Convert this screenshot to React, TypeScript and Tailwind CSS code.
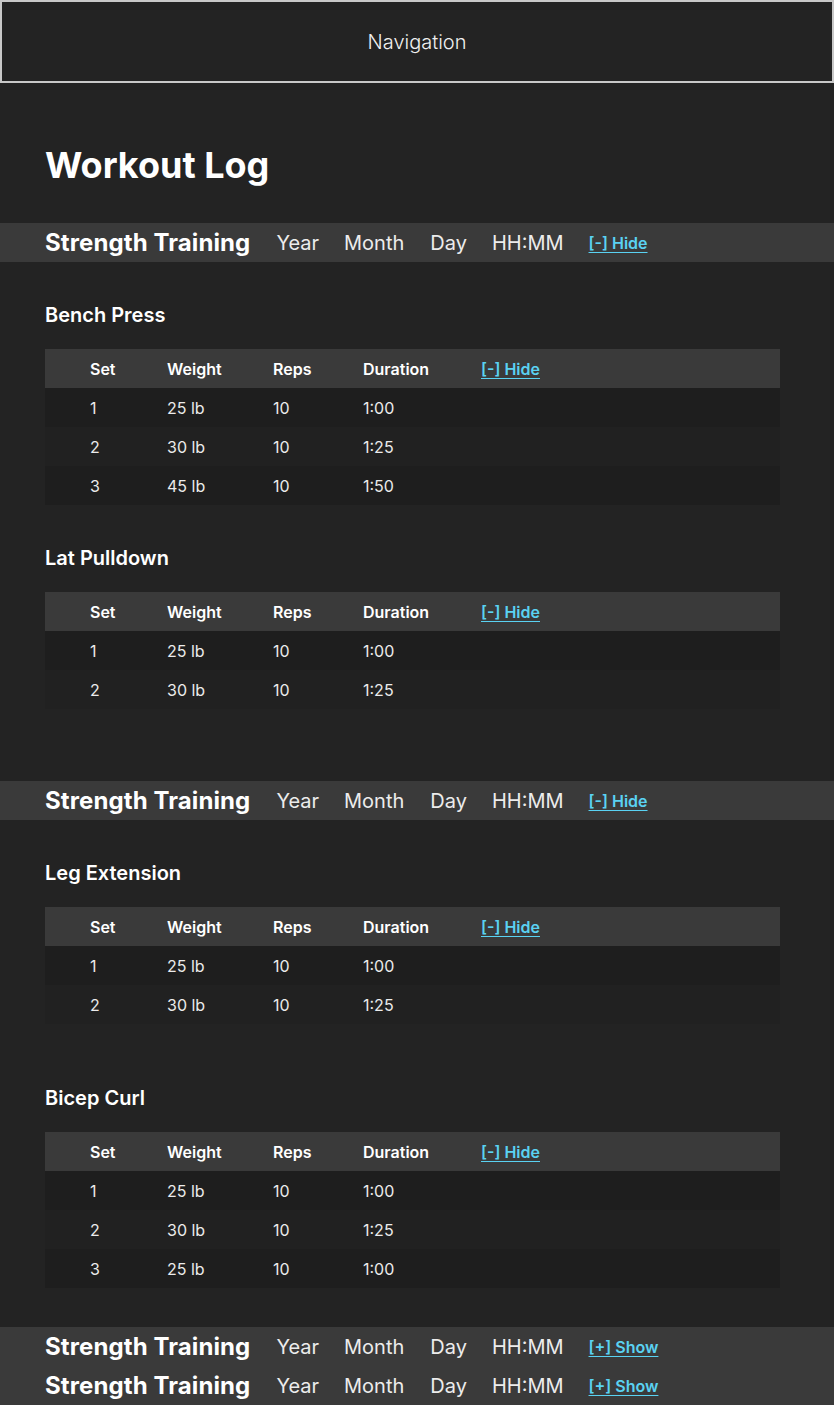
import React from "react";

type Row = { set: string; weight: string; reps: string; dur: string };
type Ex = { name: string; rows: Row[]; mt: string };

function Bar({ show }: { show?: boolean }) {
  return (
    <div className="h-[39px] bg-[#3a3a3a] flex items-center pl-[45px] whitespace-nowrap">
      <span className="text-[24px] font-bold text-white leading-none tracking-[0.1px]">Strength Training</span>
      <span className="ml-[26px] text-[20px] font-normal text-[#ececec] leading-none">Year</span>
      <span className="ml-[25px] text-[20px] font-normal text-[#ececec] leading-none">Month</span>
      <span className="ml-[26px] text-[20px] font-normal text-[#ececec] leading-none">Day</span>
      <span className="ml-[25px] text-[20px] font-normal text-[#ececec] leading-none">HH:MM</span>
      <a className="ml-[25px] text-[16px] font-semibold text-[#5ad2f2] underline underline-offset-[3px] leading-none cursor-pointer">
        {show ? "[+] Show" : "[-] Hide"}
      </a>
    </div>
  );
}

function Exercise({ ex }: { ex: Ex }) {
  return (
    <div className={ex.mt}>
      <h3 className="text-[20px] font-semibold text-white leading-[24px] ml-[45px]">{ex.name}</h3>
      <div className="mt-[22px] ml-[45px] w-[735px] text-[16px]">
        <div className="h-[39px] bg-[#3a3a3a] flex items-center pl-[45px] font-semibold text-white">
          <span className="w-[77px]">Set</span>
          <span className="w-[106px]">Weight</span>
          <span className="w-[90px]">Reps</span>
          <span className="w-[118px]">Duration</span>
          <a className="text-[16px] font-semibold text-[#5ad2f2] underline underline-offset-[3px] cursor-pointer">[-] Hide</a>
        </div>
        {ex.rows.map((r, i) => (
          <div
            key={i}
            className={`h-[39px] flex items-center pl-[45px] text-[#ebebeb] ${i % 2 === 0 ? "bg-[#1e1e1e]" : "bg-[#212121]"}`}
          >
            <span className="w-[77px]">{r.set}</span>
            <span className="w-[106px]">{r.weight}</span>
            <span className="w-[90px]">{r.reps}</span>
            <span className="w-[118px]">{r.dur}</span>
          </div>
        ))}
      </div>
    </div>
  );
}

export default function App() {
  const s1: Ex[] = [
    {
      name: "Bench Press",
      mt: "mt-[41px]",
      rows: [
        { set: "1", weight: "25 lb", reps: "10", dur: "1:00" },
        { set: "2", weight: "30 lb", reps: "10", dur: "1:25" },
        { set: "3", weight: "45 lb", reps: "10", dur: "1:50" },
      ],
    },
    {
      name: "Lat Pulldown",
      mt: "mt-[41px]",
      rows: [
        { set: "1", weight: "25 lb", reps: "10", dur: "1:00" },
        { set: "2", weight: "30 lb", reps: "10", dur: "1:25" },
      ],
    },
  ];
  const s2: Ex[] = [
    {
      name: "Leg Extension",
      mt: "mt-[41px]",
      rows: [
        { set: "1", weight: "25 lb", reps: "10", dur: "1:00" },
        { set: "2", weight: "30 lb", reps: "10", dur: "1:25" },
      ],
    },
    {
      name: "Bicep Curl",
      mt: "mt-[62px]",
      rows: [
        { set: "1", weight: "25 lb", reps: "10", dur: "1:00" },
        { set: "2", weight: "30 lb", reps: "10", dur: "1:25" },
        { set: "3", weight: "25 lb", reps: "10", dur: "1:00" },
      ],
    },
  ];
  return (
    <div className="min-h-[1405px] bg-[#232323] font-['Inter',sans-serif] overflow-hidden">
      <nav className="h-[83px] border-2 border-[#c8c8c8] flex items-center justify-center">
        <span className="text-[20px] font-light text-[#f0f0f0]">Navigation</span>
      </nav>
      <h1 className="mt-[62px] ml-[45px] text-[36px] font-bold text-white leading-[40px]">Workout Log</h1>
      <div className="mt-[38px]">
        <Bar />
        {s1.map((e) => (
          <Exercise key={e.name} ex={e} />
        ))}
      </div>
      <div className="mt-[72px]">
        <Bar />
        {s2.map((e) => (
          <Exercise key={e.name} ex={e} />
        ))}
      </div>
      <div className="mt-[39px]">
        <Bar show />
        <Bar show />
      </div>
    </div>
  );
}
